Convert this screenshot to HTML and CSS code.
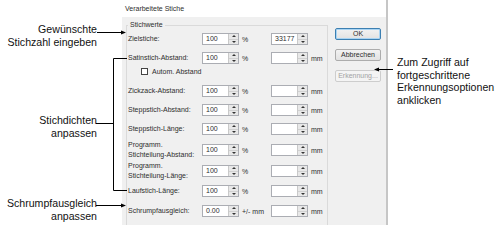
FILE: index.html
```html
<!DOCTYPE html>
<html lang="de">
<head>
    <meta charset="UTF-8">
    <meta name="viewport" content="width=device-width, initial-scale=1.0">
    <title>Verarbeitete Stiche</title>
    <link rel="stylesheet" href="styles.css">
</head>
<body>
    <div class="figure">
        <div class="dialog">
            <div class="dialog-title">Verarbeitete Stiche</div>
            <div class="dialog-body">
                <fieldset class="groupbox">
                    <legend>Stichwerte</legend>

                    <div class="row first">
                        <span class="label">Zielstiche:</span>
                        <span class="spin"><span class="val">100</span><span class="arrows"><span class="up"></span><span class="down"></span></span></span>
                        <span class="unit">%</span>
                        <span class="spin"><span class="val">33177</span><span class="arrows"><span class="up"></span><span class="down"></span></span></span>
                    </div>

                    <div class="row">
                        <span class="label">Satinstich-Abstand:</span>
                        <span class="spin"><span class="val">100</span><span class="arrows"><span class="up"></span><span class="down"></span></span></span>
                        <span class="unit">%</span>
                        <span class="spin"><span class="val"></span><span class="arrows"><span class="up"></span><span class="down"></span></span></span>
                        <span class="unit-mm">mm</span>
                    </div>

                    <div class="row check-row">
                        <span class="box"></span>
                        <span>Autom. Abstand</span>
                    </div>

                    <div class="row gap8">
                        <span class="label">Zickzack-Abstand:</span>
                        <span class="spin"><span class="val">100</span><span class="arrows"><span class="up"></span><span class="down"></span></span></span>
                        <span class="unit">%</span>
                        <span class="spin"><span class="val"></span><span class="arrows"><span class="up"></span><span class="down"></span></span></span>
                        <span class="unit-mm">mm</span>
                    </div>

                    <div class="row">
                        <span class="label">Steppstich-Abstand:</span>
                        <span class="spin"><span class="val">100</span><span class="arrows"><span class="up"></span><span class="down"></span></span></span>
                        <span class="unit">%</span>
                        <span class="spin"><span class="val"></span><span class="arrows"><span class="up"></span><span class="down"></span></span></span>
                        <span class="unit-mm">mm</span>
                    </div>

                    <div class="row">
                        <span class="label">Steppstich-Länge:</span>
                        <span class="spin"><span class="val">100</span><span class="arrows"><span class="up"></span><span class="down"></span></span></span>
                        <span class="unit">%</span>
                        <span class="spin"><span class="val"></span><span class="arrows"><span class="up"></span><span class="down"></span></span></span>
                        <span class="unit-mm">mm</span>
                    </div>

                    <div class="row multi">
                        <span class="label">Programm.<br>Stichteilung-Abstand:</span>
                        <span class="spin"><span class="val">100</span><span class="arrows"><span class="up"></span><span class="down"></span></span></span>
                        <span class="unit">%</span>
                        <span class="spin"><span class="val"></span><span class="arrows"><span class="up"></span><span class="down"></span></span></span>
                        <span class="unit-mm">mm</span>
                    </div>

                    <div class="row multi">
                        <span class="label">Programm.<br>Stichteilung-Länge:</span>
                        <span class="spin"><span class="val">100</span><span class="arrows"><span class="up"></span><span class="down"></span></span></span>
                        <span class="unit">%</span>
                        <span class="spin"><span class="val"></span><span class="arrows"><span class="up"></span><span class="down"></span></span></span>
                        <span class="unit-mm">mm</span>
                    </div>

                    <div class="row gap8">
                        <span class="label">Laufstich-Länge:</span>
                        <span class="spin"><span class="val">100</span><span class="arrows"><span class="up"></span><span class="down"></span></span></span>
                        <span class="unit">%</span>
                        <span class="spin"><span class="val"></span><span class="arrows"><span class="up"></span><span class="down"></span></span></span>
                        <span class="unit-mm">mm</span>
                    </div>

                    <div class="row gap8">
                        <span class="label">Schrumpfausgleich:</span>
                        <span class="spin"><span class="val">0.00</span><span class="arrows"><span class="up"></span><span class="down"></span></span></span>
                        <span class="unit">+/- mm</span>
                        <span class="spin"><span class="val"></span><span class="arrows"><span class="up"></span><span class="down"></span></span></span>
                        <span class="unit-mm">mm</span>
                    </div>
                </fieldset>

                <div class="buttons">
                    <div class="btn default">OK</div>
                    <div class="btn">Abbrechen</div>
                    <div class="btn disabled">Erkennung...</div>
                </div>
            </div>
        </div>

        <!-- callouts -->
        <div class="callout left c-target">Gewünschte<br>Stichzahl eingeben</div>
        <div class="callout left c-density">Stichdichten<br>anpassen</div>
        <div class="callout left c-shrink">Schrumpfausgleich<br>anpassen</div>
        <div class="callout c-detect">Zum Zugriff auf<br>fortgeschrittene<br>Erkennungsoptionen<br>anklicken</div>

        <svg class="leaders" width="499" height="241" viewBox="0 0 499 241">
            <g fill="none" stroke="#000" stroke-width="1">
                <polyline points="97,32.5 122,32.5"/>
                <polyline points="127,58.5 113.5,58.5 113.5,190.5 127,190.5"/>
                <polyline points="96,123.5 113.5,123.5"/>
                <polyline points="96,205.5 122,205.5"/>
                <polyline points="378,69.5 393,69.5"/>
            </g>
            <g fill="#000">
                <polygon points="126,32.5 121,30.5 121,34.5"/>
                <polygon points="126,205.5 121,203.5 121,207.5"/>
                <polygon points="374,69.5 379,67.5 379,71.5"/>
            </g>
        </svg>
    </div>
</body>
</html>
```

FILE: styles.css
```css
body {
    margin: 0;
    background-color: #fff;
    font-family: "Liberation Sans", Arial, sans-serif;
}
.figure {
    position: relative;
    width: 499px;
    height: 241px;
    overflow: hidden;
}
.dialog {
    margin-left: 122px;
    width: 264px;
    border-right: 2px solid #c6c6c6;
    font-size: 7px;
    color: #2e2e2e;
}
.dialog-title {
    height: 17px;
    line-height: 17px;
    padding-left: 3px;
    background-color: #fff;
}
.dialog-body {
    display: flex;
    align-items: flex-start;
    height: 208px;
    padding: 4px 0 0 4px;
    box-sizing: border-box;
    overflow: hidden;
    background-color: #f0f0f0;
}
.groupbox {
    width: 202px;
    min-width: 0;
    margin: 0;
    padding: 0 0 14px 1px;
    box-sizing: border-box;
    border: 1px solid #dadada;
}
.groupbox legend {
    padding: 0 2px;
    line-height: 8px;
}
.row {
    display: flex;
    align-items: center;
    height: 12px;
    margin-top: 7px;
}
.row.first {
    margin-top: 4px;
}
.row.gap8 {
    margin-top: 8px;
}
.row.multi {
    margin-top: 9px;
}
.row.check-row {
    margin-top: 1px;
    padding-left: 13px;
}
.label {
    width: 74px;
    line-height: 10px;
}
.box {
    width: 7px;
    height: 7px;
    margin-right: 4px;
    box-sizing: border-box;
    border: 1px solid #444;
    background-color: #fff;
}
.spin {
    display: flex;
    width: 37px;
    height: 12px;
    box-sizing: border-box;
    border: 1px solid #abadb3;
    background-color: #fff;
}
.val {
    flex: 1;
    padding-left: 3px;
    line-height: 10px;
}
.arrows {
    display: flex;
    flex-direction: column;
    width: 9px;
    border-left: 1px solid #c9c9c9;
    background-color: #e8e8e8;
}
.arrows span {
    flex: 1;
    display: flex;
    align-items: center;
    justify-content: center;
}
.arrows .up {
    border-bottom: 1px solid #d0d0d0;
}
.arrows .up::before,
.arrows .down::before {
    content: "";
    border-left: 2px solid transparent;
    border-right: 2px solid transparent;
}
.arrows .up::before {
    border-bottom: 2px solid #333;
}
.arrows .down::before {
    border-top: 2px solid #333;
}
.unit {
    width: 32px;
    padding-left: 3px;
    box-sizing: border-box;
}
.unit-mm {
    padding-left: 3px;
}
.buttons {
    display: flex;
    flex-direction: column;
    gap: 9px;
    margin: 7px 0 0 7px;
}
.btn {
    width: 46px;
    height: 12px;
    box-sizing: border-box;
    border: 1px solid #acacac;
    border-radius: 2px;
    background: linear-gradient(#f2f2f2, #e2e2e2);
    text-align: center;
    line-height: 10px;
}
.btn.default {
    border-color: #3c7fb1;
    box-shadow: inset 0 0 0 1px #a9d4f3;
}
.btn.disabled {
    color: #a3a3a3;
    border-color: #cdcdcd;
    background: #f4f4f4;
}
.callout {
    position: absolute;
    font-size: 10.6px;
    line-height: 12.5px;
    color: #111;
}
.callout.left {
    left: 0;
    width: 97px;
    text-align: right;
}
.c-target {
    top: 23px;
}
.c-density {
    top: 114px;
}
.c-shrink {
    top: 197px;
}
.c-detect {
    left: 397px;
    top: 56px;
}
.leaders {
    position: absolute;
    top: 0;
    left: 0;
    pointer-events: none;
}
```
